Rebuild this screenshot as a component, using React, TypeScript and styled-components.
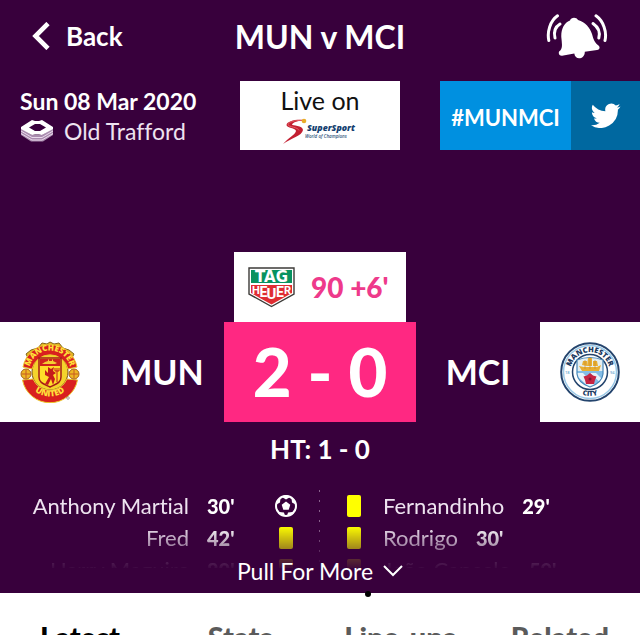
import React from "react";
import styled, { createGlobalStyle } from "styled-components";

const GlobalStyle = createGlobalStyle`
  *, *::before, *::after { box-sizing: border-box; }
  body {
    margin: 0;
    overflow: hidden;
    background: #ffffff;
    font-family: "Lato", "Open Sans", sans-serif;
    font-variant-ligatures: none;
    color: #ffffff;
  }
  button { font: inherit; color: inherit; background: none; border: 0; padding: 0; cursor: pointer; }
  a { color: inherit; text-decoration: none; }
  h1, h2, p, ul { margin: 0; padding: 0; }
  svg { display: block; flex: none; }
`;

const MatchPanel = styled.main`
  background: #38003c;
`;

const TopBar = styled.header`
  display: grid;
  grid-template-columns: 1fr auto 1fr;
  align-items: center;
  height: 81px;
  padding: 0 32px 8px;
`;

const BackButton = styled.button`
  justify-self: start;
  display: flex;
  align-items: center;
  gap: 16px;
  padding-bottom: 2px;
  font-size: 26px;
  line-height: 28px;
  font-weight: 700;
`;

const Title = styled.h1`
  font-size: 32px;
  line-height: 40px;
  font-weight: 700;
`;

const AlertButton = styled.button`
  justify-self: end;
`;

const InfoRow = styled.section`
  display: grid;
  grid-template-columns: 1fr 160px 1fr;
  height: 69px;
`;

const Venue = styled.div`
  padding: 5px 0 0 20px;
  white-space: nowrap;
`;

const MatchDate = styled.p`
  font-size: 23px;
  line-height: 30px;
  font-weight: 700;
`;

const Ground = styled.p`
  display: flex;
  align-items: center;
  gap: 10px;
  font-size: 23px;
  line-height: 30px;
  color: #eee3f0;
`;

const Broadcaster = styled.a`
  display: flex;
  flex-direction: column;
  align-items: center;
  padding-top: 4px;
  background: #ffffff;
  color: #111111;
  font-size: 25px;
  line-height: 30px;
`;

const Social = styled.a`
  justify-self: end;
  display: flex;
  width: 200px;
  background: #0090e0;
`;

const Hashtag = styled.span`
  flex: 1;
  display: grid;
  place-items: center;
  padding-top: 4px;
  font-size: 22px;
  line-height: 28px;
  font-weight: 700;
`;

const SocialIcon = styled.span`
  display: grid;
  place-items: center;
  width: 69px;
  background: #0068a0;
`;

const Clock = styled.section`
  display: flex;
  align-items: center;
  gap: 16px;
  width: 172px;
  height: 70px;
  margin: 102px auto 0;
  padding-left: 14px;
  background: #ffffff;
  color: #ee3a8b;
  font-size: 28px;
  line-height: 36px;
  font-weight: 900;
`;

const ScoreRow = styled.section`
  display: grid;
  grid-template-columns: 100px 1fr 192px 1fr 100px;
  align-items: stretch;
  height: 100px;
  text-align: center;
`;

const Crest = styled.div`
  display: grid;
  place-items: center;
  background: #ffffff;
`;

const TeamName = styled.h2`
  align-self: center;
  font-size: 34px;
  line-height: 40px;
  font-weight: 700;
`;

const Score = styled.div`
  background: #ff2882;
  font-size: 67px;
  line-height: 98px;
  font-weight: 900;
`;

const HalfTime = styled.p`
  padding-top: 11px;
  text-align: center;
  font-size: 26px;
  line-height: 32px;
  font-weight: 700;
`;

const Events = styled.section`
  display: grid;
  grid-template-columns: 1fr 1fr;
  height: 78px;
  margin-top: 25px;
  overflow: hidden;
  mask-image: linear-gradient(to bottom, #000 36px, rgba(0, 0, 0, 0.5) 60px, rgba(0, 0, 0, 0.15) 70px, rgba(0, 0, 0, 0.04) 78px);
`;

const EventList = styled.ul<{ $home?: boolean }>`
  list-style: none;
  padding-right: ${(p) => (p.$home ? "23px" : "0")};
  padding-left: ${(p) => (p.$home ? "0" : "23px")};
  background-image: ${(p) =>
    p.$home ? "repeating-linear-gradient(to bottom, #88608b 0 2px, transparent 2px 10px)" : "none"};
  background-size: 1px 100%;
  background-position: right top;
  background-repeat: no-repeat;
`;

const EventItem = styled.li<{ $home?: boolean }>`
  display: grid;
  grid-template-columns: ${(p) => (p.$home ? "1fr 50px 22px" : "22px auto 1fr")};
  column-gap: 18px;
  align-items: center;
  justify-items: ${(p) => (p.$home ? "end" : "start")};
  height: 32px;
  font-size: 22px;
  line-height: 32px;
  white-space: nowrap;
`;

const Player = styled.span`
  color: #eee3f0;
`;

const Minute = styled.span`
  justify-self: start;
  font-size: 20px;
  font-weight: 900;
`;

const YellowCard = styled.span`
  justify-self: center;
  width: 14px;
  height: 22px;
  border-radius: 2px;
  background: #ffff00;
`;

const PullButton = styled.button`
  display: flex;
  align-items: center;
  justify-content: center;
  gap: 10px;
  width: 100%;
  margin-top: -11px;
  padding-bottom: 8px;
  position: relative;
  font-size: 23px;
  line-height: 28px;
`;

const Tabs = styled.nav`
  position: relative;
  display: grid;
  grid-template-columns: repeat(4, 1fr);
  padding-top: 26px;
  background: #ffffff;
`;

const Tab = styled.button<{ $active?: boolean }>`
  color: ${(p) => (p.$active ? "#000000" : "#5b5b5b")};
  font-size: 29px;
  line-height: 36px;
  font-weight: 900;
`;

const TabMarker = styled.span`
  position: absolute;
  top: -2px;
  left: calc(50% + 45px);
  width: 6px;
  height: 6px;
  border-radius: 50%;
  background: #000000;
`;

const BackIcon = () => (
  <svg width="18" height="28" viewBox="0 0 18 28" aria-hidden="true">
    <path d="M16 1.500L3.500 14L16 26.500" fill="none" stroke="#fff" strokeWidth="4.600" />
  </svg>
);

const BellIcon = () => (
  <svg width="62" height="46" viewBox="0 0 62 46" aria-hidden="true">
    <path
      d="M24 6.500C25 3 30.500 3 32 6C39.500 8 44 14 46 20C47.500 26 49 29 52.500 31.500C54.500 33 53.500 36 51 36L38.800 37.700C39 45.500 29 46.800 28.300 39.600L16 41.800C12.700 42 11.600 38 14.300 36.600C17 33.500 15.700 28 15.300 23C15 15 18 9 24 6.500Z"
      fill="#fff"
    />
    <g fill="none" stroke="#fff" strokeWidth="3" strokeLinecap="round">
      <path d="M11.500 1.800C4 7 1 18 2.800 26.500" />
      <path d="M14 10C9 13 7.500 18 9 24" />
      <path d="M50 1.800C57.500 7 61 18 59 26.500" />
      <path d="M47 9.500C52 13 54.500 18 52.800 24" />
    </g>
  </svg>
);

const StadiumIcon = () => (
  <svg width="34" height="22" viewBox="0 0 34 22" aria-hidden="true">
    <path d="M1 8L12 15L22 15L33 8V15L23 21.500H11L1 15Z" fill="#a98bae" />
    <path d="M1 11L12 17.500H22L33 11M1 13.500L12 20H22L33 13.500" fill="none" stroke="#ead9ec" strokeWidth="1" />
    <path fillRule="evenodd" d="M12 0L15 1H19L22 0L33 7V9L22 15L19 14.500H15L12 15L1 9V7ZM15 4L9 7.500L15 11H20L26 7.500L20 4Z" fill="#fff" />
  </svg>
);

const SuperSportLogo = () => (
  <svg width="76" height="30" viewBox="0 0 76 30" role="img" aria-label="SuperSport World of Champions">
    <path d="M22 5C14 4 5 6 4.500 10C4.500 13 14 13 14 16C13 20 6 23 1 29C9 23 20 21 21 15C21 10 10 11 10 9.500C11 7 16 6 22 5Z" fill="#c31f31" />
    <path d="M20 5.500C13 5 6 7 6 10C7 12 16 12 17 15.500" fill="none" stroke="#e55b61" strokeWidth="1" />
    <circle cx="22" cy="6" r="2.300" fill="#e9ad28" />
    <text x="25" y="16" fontFamily="Open Sans" fontSize="8.800" fontWeight="800" fontStyle="italic" fill="#143f70">SuperSport</text>
    <text x="23" y="23" fontFamily="Open Sans" fontSize="4.500" fontWeight="600" fontStyle="italic" fill="#31577d">World of Champions</text>
  </svg>
);

const TwitterIcon = () => (
  <svg width="30" height="25" viewBox="0 0 24 20" aria-hidden="true">
    <path d="M23.600 2.700a9.500 9.500 0 0 1-2.800.8 4.900 4.900 0 0 0 2.100-2.700 10 10 0 0 1-3.100 1.200A4.900 4.900 0 0 0 11.500 6.500 14 14 0 0 1 1.400 1.300a4.900 4.900 0 0 0 1.500 6.600 4.800 4.800 0 0 1-2.200-.6c0 2.300 1.600 4.400 3.900 4.900a5 5 0 0 1-2.200.1 4.900 4.900 0 0 0 4.600 3.400A9.900 9.900 0 0 1 0 17.700 14 14 0 0 0 21.500 5.300a10 10 0 0 0 2.100-2.600z" fill="#fff" />
  </svg>
);

const TagHeuerLogo = () => (
  <svg width="47" height="41" viewBox="0 0 47 41" role="img" aria-label="TAG Heuer">
    <path d="M1 1H46V27L23.500 39.500L1 27Z" fill="#fff" stroke="#3d3b38" strokeWidth="1.400" />
    <path d="M3 3H44V16H3Z" fill="#079260" />
    <path d="M3 18H44V26L23.500 37.500L3 26Z" fill="#df2c32" />
    <text x="23.500" y="14.500" textAnchor="middle" fontFamily="DejaVu Sans" fontWeight="700" fontSize="15" fill="#fff">TAG</text>
    <g fontFamily="Roboto" fontWeight="700" fill="#fff" textAnchor="middle">
      <text x="8" y="27" fontSize="11">H</text>
      <text x="15.500" y="30" fontSize="14">E</text>
      <text x="23.500" y="32" fontSize="15">U</text>
      <text x="32" y="30" fontSize="14">E</text>
      <text x="39.500" y="27" fontSize="11">R</text>
    </g>
  </svg>
);

const UnitedCrest = () => (
  <svg width="60" height="62" viewBox="0 0 60 62" role="img" aria-label="Manchester United">
    <defs>
      <path id="united-top" d="M9.500 30A20.500 20.500 0 0 1 50.500 30" />
      <path id="united-bottom" d="M5.500 31A24.500 24.500 0 0 0 54.500 31" />
    </defs>
    <path d="M18 7L22 2L27 3L30 1L34 3L39 2L43 7L49 9L54 13L51 19H9L6 13L11 9ZM18 55L23 59L30 60L37 59L42 55Z" fill="#e5b723" stroke="#82651d" strokeWidth="1" />
    <circle cx="30" cy="31" r="18" fill="#f4d32c" stroke="#7b551a" strokeWidth="1" />
    <path d="M3 26A27.500 27.500 0 0 1 57 26L48 28A18.500 18.500 0 0 0 12 28Z" fill="#d9201f" stroke="#ecc52b" strokeWidth="1" />
    <path d="M2.500 39A28 28 0 0 0 57.500 39L47 38A18.500 18.500 0 0 1 13 38Z" fill="#d9201f" stroke="#ecc52b" strokeWidth="1" />
    <circle cx="6" cy="33" r="5" fill="#edb724" stroke="#a76018" strokeWidth="1" />
    <circle cx="54" cy="33" r="5" fill="#edb724" stroke="#a76018" strokeWidth="1" />
    <path d="M6 29V37M2 33H10M54 29V37M50 33H58" stroke="#c75b22" strokeWidth="1" />
    <path d="M19 17H41V36C41 42 36 43 30 46C24 43 19 42 19 36Z" fill="#ffdc29" stroke="#a41c17" strokeWidth="1.500" />
    <path d="M20 18H40V25H20Z" fill="#cf221d" />
    <path d="M22 23L25 21L28 20V18.500H29V20L32 20V18.500H33V20L37 22L35 23H25Z" fill="#f4cd32" />
    <path d="M28 26L31 28L34 26L33 30L36 32L33 34L35 38L33 44L31 38L28 44L25 43L29 36L25 34V29L28 32Z" fill="#c51c1b" />
    <path d="M37 27V41M35 27V30H39V27" fill="none" stroke="#c51c1b" strokeWidth="1" />
    <text fontFamily="Open Sans" fontSize="8" fontWeight="800" fill="#ffe03a" textAnchor="middle"><textPath href="#united-top" startOffset="50%">MANCHESTER</textPath></text>
    <text fontFamily="Open Sans" fontSize="8.500" fontWeight="800" fill="#ffe03a" textAnchor="middle"><textPath href="#united-bottom" startOffset="50%">UNITED</textPath></text>
    <circle cx="48" cy="57" r="1.300" fill="none" stroke="#555" strokeWidth=".5" />
  </svg>
);

const CityCrest = () => (
  <svg width="60" height="60" viewBox="0 0 60 60" role="img" aria-label="Manchester City">
    <defs>
      <path id="city-top" d="M11.500 37A19.800 19.800 0 1 1 48.500 37" />
      <path id="city-bottom" d="M6 30A24 24 0 0 0 54 30" />
      <clipPath id="city-shield"><path d="M17 18Q30 13 43 18V32Q42 41 30 45Q18 41 17 32Z" /></clipPath>
    </defs>
    <circle cx="30" cy="30" r="28.800" fill="#fff" stroke="#24446d" strokeWidth="2" />
    <circle cx="30" cy="30" r="26.500" fill="none" stroke="#9ac9e7" strokeWidth="1.500" />
    <circle cx="30" cy="30" r="17.500" fill="#fff" stroke="#24446d" strokeWidth="1.500" />
    <g clipPath="url(#city-shield)">
      <path d="M16 12H44V29H16Z" fill="#e4eef2" />
      <path d="M16 29H44V47H16Z" fill="#83bde7" />
      <path d="M17 31H23L38 47H31L17 34ZM30 31H36L43 38V43Z" fill="#fff" opacity=".8" />
    </g>
    <path d="M17 18Q30 13 43 18V32Q42 41 30 45Q18 41 17 32Z" fill="none" stroke="#4787b8" strokeWidth="1.200" />
    <path d="M19 24L24 25H37L41 23L39 29H22ZM22 23L23 19H27V24ZM28 16H32V24H27ZM33 19H37L38 24H33Z" fill="#e8ae32" />
    <path d="M25 18V27M30 15V27M35 18V27" stroke="#c98a2c" strokeWidth=".7" />
    <path d="M30 31L33 33.500L36.500 34.500L35 38L34 42H26L25 38L23.500 34.500L27 33.500Z" fill="#c62443" />
    <circle cx="30" cy="37" r="1.500" fill="#7e1937" />
    <text fontFamily="Open Sans" fontSize="7.500" fontWeight="800" fill="#20395f" textAnchor="middle"><textPath href="#city-top" startOffset="50%">MANCHESTER</textPath></text>
    <text fontFamily="Open Sans" fontSize="7" fontWeight="800" fill="#20395f" textAnchor="middle"><textPath href="#city-bottom" startOffset="50%">CITY</textPath></text>
    <g fontFamily="Open Sans" fontSize="4" fontWeight="600" fill="#71add3"><text x="5" y="32">18</text><text x="50" y="32">94</text></g>
  </svg>
);

const BallIcon = () => (
  <svg width="22" height="22" viewBox="0 0 22 22" role="img" aria-label="Goal">
    <circle cx="11" cy="11" r="10" fill="#38003c" stroke="#fff" strokeWidth="2" />
    <path d="M11 6.500L15.300 9.700L13.700 14.800H8.300L6.700 9.700ZM6 1.500L11 4.500L16 1.500L12 0H10ZM0.500 10L5 7.500L5.500 3L2 5ZM16.500 3L17 7.500L21.500 10L20 5ZM1.500 13L4.500 17L9 17.500L10 21L4 19ZM20.500 13L17.500 17L13 17.500L12 21L18 19Z" fill="#fff" />
  </svg>
);

const DownIcon = () => (
  <svg width="20" height="12" viewBox="0 0 20 12" aria-hidden="true">
    <path d="M1 1L10 10L19 1" fill="none" stroke="#fff" strokeWidth="2" />
  </svg>
);

type MatchEvent = { player: string; minute: string; kind: "goal" | "card" };

const homeEvents: MatchEvent[] = [
  { player: "Anthony Martial", minute: "30'", kind: "goal" },
  { player: "Fred", minute: "42'", kind: "card" },
  { player: "Harry Maguire", minute: "80'", kind: "card" },
];

const awayEvents: MatchEvent[] = [
  { player: "Fernandinho", minute: "29'", kind: "card" },
  { player: "Rodrigo", minute: "30'", kind: "card" },
  { player: "João Cancelo", minute: "59'", kind: "card" },
];

const tabs = ["Latest", "Stats", "Line-ups", "Related"];

const EventIcon = ({ kind }: { kind: MatchEvent["kind"] }) =>
  kind === "goal" ? <BallIcon /> : <YellowCard role="img" aria-label="Yellow card" />;

export default function App() {
  return (
    <>
      <GlobalStyle />
      <MatchPanel>
        <TopBar>
          <BackButton type="button"><BackIcon />Back</BackButton>
          <Title>MUN v MCI</Title>
          <AlertButton type="button" aria-label="Match alerts"><BellIcon /></AlertButton>
        </TopBar>

        <InfoRow>
          <Venue>
            <MatchDate>Sun 08 Mar 2020</MatchDate>
            <Ground><StadiumIcon />Old Trafford</Ground>
          </Venue>
          <Broadcaster href="#broadcaster">Live on<SuperSportLogo /></Broadcaster>
          <Social href="#social">
            <Hashtag>#MUNMCI</Hashtag>
            <SocialIcon><TwitterIcon /></SocialIcon>
          </Social>
        </InfoRow>

        <Clock><TagHeuerLogo />90 +6'</Clock>
        <ScoreRow>
          <Crest><UnitedCrest /></Crest>
          <TeamName>MUN</TeamName>
          <Score>2 - 0</Score>
          <TeamName>MCI</TeamName>
          <Crest><CityCrest /></Crest>
        </ScoreRow>
        <HalfTime>HT: 1 - 0</HalfTime>

        <Events>
          <EventList $home>
            {homeEvents.map((e) => (
              <EventItem key={e.player} $home>
                <Player>{e.player}</Player>
                <Minute>{e.minute}</Minute>
                <EventIcon kind={e.kind} />
              </EventItem>
            ))}
          </EventList>
          <EventList>
            {awayEvents.map((e) => (
              <EventItem key={e.player}>
                <EventIcon kind={e.kind} />
                <Player>{e.player}</Player>
                <Minute>{e.minute}</Minute>
              </EventItem>
            ))}
          </EventList>
        </Events>
        <PullButton type="button">Pull For More<DownIcon /></PullButton>
      </MatchPanel>

      <Tabs>
        <TabMarker />
        {tabs.map((tab, i) => (
          <Tab key={tab} type="button" $active={i === 0}>{tab}</Tab>
        ))}
      </Tabs>
    </>
  );
}
